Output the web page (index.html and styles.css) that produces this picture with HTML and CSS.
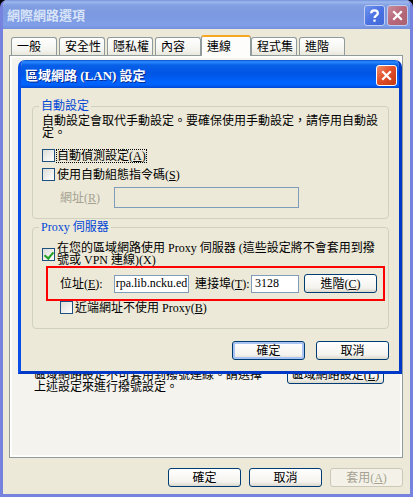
FILE: index.html
```html
<!DOCTYPE html>
<html lang="zh-Hant">
<head>
    <meta charset="UTF-8">
    <meta name="viewport" content="width=device-width, initial-scale=1.0">
    <title>網際網路選項</title>
    <link rel="stylesheet" href="styles.css">
</head>
<body>
    <div class="window">
        <header class="titlebar inactive">
            <h1>網際網路選項</h1>
            <button class="caption help" aria-label="說明">
                <svg viewBox="0 0 20 20"><path d="M6.5 7.5C6.5 3.5 13.5 3.5 13.5 7.5C13.5 10 10 10 10 12.7M10 14.2V16.5" /></svg>
            </button>
            <button class="caption close" aria-label="關閉">
                <svg viewBox="0 0 20 20"><path d="M5.5 5.5L14.5 14.5M14.5 5.5L5.5 14.5" /></svg>
            </button>
        </header>
        <main class="window-body">
            <nav class="tabs" role="tablist">
                <button class="tab" role="tab">一般</button>
                <button class="tab" role="tab">安全性</button>
                <button class="tab" role="tab">隱私權</button>
                <button class="tab" role="tab">內容</button>
                <button class="tab selected" role="tab" aria-selected="true">連線</button>
                <button class="tab" role="tab">程式集</button>
                <button class="tab" role="tab">進階</button>
            </nav>
            <section class="panel">
                <div class="lan-row">
                    <p>區域網路設定不可套用到撥號連線。請選擇上述設定來進行撥號設定。</p>
                    <button class="btn">區域網路設定(<u>L</u>)</button>
                </div>
            </section>
            <footer class="buttons">
                <button class="btn">確定</button>
                <button class="btn">取消</button>
                <button class="btn" disabled>套用(<u>A</u>)</button>
            </footer>
        </main>

        <div class="dialog" role="dialog" aria-labelledby="lanTitle">
            <header class="titlebar">
                <h2 id="lanTitle">區域網路 (LAN) 設定</h2>
                <button class="caption close" aria-label="關閉">
                    <svg viewBox="0 0 20 20"><path d="M5.5 5.5L14.5 14.5M14.5 5.5L5.5 14.5" /></svg>
                </button>
            </header>
            <form class="dialog-body">
                <fieldset class="auto">
                    <legend>自動設定</legend>
                    <p>自動設定會取代手動設定。要確保使用手動設定，請停用自動設定。</p>
                    <div class="check first">
                        <input type="checkbox" id="detect">
                        <label for="detect" class="focused">自動偵測設定(<u>A</u>)</label>
                    </div>
                    <div class="check">
                        <input type="checkbox" id="script">
                        <label for="script">使用自動組態指令碼(<u>S</u>)</label>
                    </div>
                    <div class="url-row">
                        <label for="url">網址(<u>R</u>)</label>
                        <input type="text" id="url" disabled>
                    </div>
                </fieldset>
                <fieldset class="proxy">
                    <legend>Proxy 伺服器</legend>
                    <div class="check wide">
                        <input type="checkbox" id="useProxy" checked>
                        <label for="useProxy">在您的區域網路使用 Proxy 伺服器 (這些設定將不會套用到撥號或 VPN 連線)(X)</label>
                    </div>
                    <div class="address-row">
                        <label for="address">位址(<u>E</u>):</label>
                        <input type="text" id="address" value="rpa.lib.ncku.ed">
                        <label for="port" class="port-label">連接埠(<u>T</u>):</label>
                        <input type="text" id="port" value="3128">
                        <button type="button" class="btn">進階(<u>C</u>)</button>
                    </div>
                    <div class="check local">
                        <input type="checkbox" id="bypass">
                        <label for="bypass">近端網址不使用 Proxy(<u>B</u>)</label>
                    </div>
                </fieldset>
                <div class="buttons">
                    <button type="button" class="btn default">確定</button>
                    <button type="button" class="btn">取消</button>
                </div>
            </form>
        </div>
    </div>
</body>
</html>
```
FILE: styles.css
```css
* {
    box-sizing: border-box;
}
body {
    margin: 0;
    background: #000;
}
body, button, input {
    font-family: "Liberation Serif", "Noto Sans CJK TC", serif;
    font-size: 12px;
    line-height: 12px;
    color: #000;
}
h1, h2, p {
    margin: 0;
}
.window {
    position: relative;
    display: flex;
    flex-direction: column;
    min-height: 100vh;
    border: 3px solid #7583df;
    border-top: 0;
    border-radius: 7px 7px 0 0;
    background: #ece9d8;
    overflow: hidden;
}

/* Title bars */
.titlebar {
    display: flex;
    align-items: center;
    gap: 2px;
    height: 28px;
    background: linear-gradient(#0a50d0 0, #2a8cff 2px, #0860e8 5px, #0055e5 14px, #0064ff 22px, #0062fb 25px, #0046d0 28px);
}
.titlebar h1, .titlebar h2 {
    flex: 1;
    font-size: 13px;
    line-height: 16px;
    color: #fff;
    text-shadow: 1px 1px #0a2a90;
}
.titlebar.inactive {
    height: 29px;
    margin: 0 -3px;
    padding: 2px 5px 0 7px;
    background: linear-gradient(#7490dd 0, #9db9ee 2px, #829fe2 5px, #7b98e0 14px, #809fe8 25px, #7590db 29px);
}
.titlebar.inactive h1 {
    color: #d8e4f8;
    text-shadow: none;
}
.caption {
    width: 21px;
    height: 21px;
    padding: 0;
    border: 1px solid #fff;
    border-radius: 3px;
    background: linear-gradient(135deg, #f0906c, #e2502a 45%, #c43a14);
}
.caption svg {
    display: block;
    width: 19px;
    height: 19px;
    fill: none;
    stroke: #fff;
    stroke-width: 2.4;
}
.inactive .caption {
    border-color: #c0cdf0;
    background: linear-gradient(135deg, #c88e9c, #b8687a 50%, #a9606f);
}
.inactive .caption.help {
    background: linear-gradient(135deg, #7194ee, #4a72e2 50%, #4068da);
}

/* Tabs */
.window-body {
    flex: 1;
    display: flex;
    flex-direction: column;
    padding: 6px 7px 7px 6px;
}
.tabs {
    display: flex;
    align-items: flex-end;
    gap: 2px;
    height: 20px;
    padding-left: 2px;
}
.tab {
    width: 46px;
    height: 18px;
    padding: 0 0 0 5px;
    border: 1px solid #919b9c;
    border-bottom: 0;
    border-radius: 3px 3px 0 0;
    background: linear-gradient(#fff, #f4f4ef 70%, #e8e7dc);
    text-align: left;
}
.tab.selected {
    position: relative;
    width: 50px;
    height: 21px;
    margin: 0 -2px -1px;
    border-top: 2px solid #f5a623;
    background: #fdfdfb;
}
.panel {
    flex: 1;
    display: flex;
    flex-direction: column;
    justify-content: flex-end;
    padding: 0 18px 64px 24px;
    border: 1px solid #919b9c;
    box-shadow: inset 0 0 0 2px #fdfdfc;
    background: #f4f3ee;
}
.lan-row {
    display: flex;
    align-items: flex-end;
    justify-content: space-between;
}
.lan-row p {
    width: 230px;
}
.lan-row .btn {
    width: 97px;
    margin-bottom: 9px;
}

/* Buttons */
.btn {
    width: 73px;
    height: 19px;
    padding: 0;
    border: 1px solid #003c74;
    border-radius: 3px;
    background: linear-gradient(#fff, #f4f3ee 75%, #dcd8cc);
    white-space: nowrap;
}
.btn.default {
    box-shadow: inset 0 0 0 2px #a9c4f2;
}
.btn:disabled {
    border-color: #cbc8b8;
    background: #f4f2e8;
    color: #a5a292;
}
.buttons {
    display: flex;
    justify-content: flex-end;
    gap: 8px;
    margin-top: 10px;
}

/* LAN dialog */
.dialog {
    position: absolute;
    top: 60px;
    left: 15px;
    right: 8px;
    border: 3px solid #0038c8;
    border-left-color: #0a50e8;
    border-top: 0;
    border-radius: 7px 7px 0 0;
    background: #ece9d8;
    overflow: hidden;
}
.dialog .titlebar {
    margin: 0 -3px;
    padding: 3px 5px 0 7px;
}
.dialog-body {
    padding: 11px 10px 11px 11px;
}
.dialog .buttons {
    gap: 11px;
    margin-top: 12px;
}
fieldset {
    min-width: 0;
    margin: 0;
    padding: 2px 3px 10px 9px;
    border: 1px solid #d0d0bf;
    border-radius: 4px;
}
legend {
    margin-left: -3px;
    padding: 0 2px;
    line-height: 14px;
    color: #0046d5;
}
.proxy {
    margin-top: 1px;
    padding: 8px 3px 14px 9px;
}
.check {
    display: flex;
    align-items: center;
    gap: 2px;
    margin-top: 6px;
}
.check.first {
    margin-top: 10px;
}
.check.wide {
    margin-top: 0;
}
.check.local {
    margin: 0 0 0 18px;
}
.focused {
    outline: 1px dotted #000;
}
input[type="checkbox"] {
    appearance: none;
    flex: none;
    width: 13px;
    height: 13px;
    margin: 0;
    border: 1px solid #1c5180;
    background: linear-gradient(135deg, #dcdcd7, #fff);
}
input[type="checkbox"]:checked::before {
    content: "";
    display: block;
    width: 4px;
    height: 7px;
    margin: 1px 0 0 3px;
    border: solid #21a121;
    border-width: 0 2px 2px 0;
    transform: rotate(40deg);
}
input[type="text"] {
    min-width: 0;
    height: 18px;
    padding: 0 3px;
    border: 1px solid #7f9db9;
    background: #fff;
}
.url-row {
    display: flex;
    align-items: center;
    margin: 6px 0 0 18px;
    color: #a5a292;
}
.url-row label {
    width: 54px;
}
.url-row input[type="text"] {
    width: 185px;
    height: 21px;
    background: #ece9d8;
}
.address-row {
    display: flex;
    align-items: center;
    height: 35px;
    margin-left: 4px;
    padding: 0 6px 0 12px;
    border: 2px solid #f00;
}
.address-row label {
    width: 54px;
    white-space: nowrap;
}
.address-row #address {
    width: 75px;
    padding: 0;
    text-align: center;
}
.address-row .port-label {
    width: 56px;
    margin-left: 6px;
}
#port {
    width: 48px;
}
.address-row .btn {
    margin-left: auto;
}
```
